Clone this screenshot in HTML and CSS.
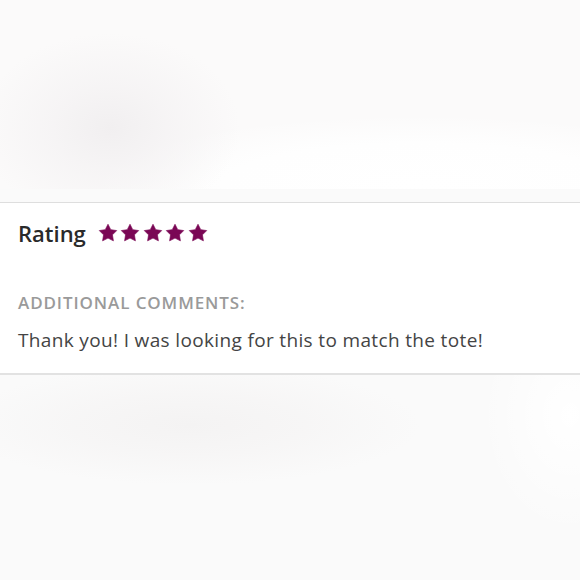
FILE: index.html
```html
<!DOCTYPE html>
<html>
<head>
<meta charset="utf-8">
<link rel="stylesheet" href="styles.css">
</head>
<body>
<div class="page">
  <div class="photo photo-top"></div>
  <div class="band"></div>
  <section class="review">
    <div class="rating-row">
      <span class="rating-label">Rating</span>
      <span class="stars">
        <svg class="star" viewBox="0 0 24 24"><polygon points="12,1.5 15.29,7.97 22.46,9.1 17.33,14.23 18.47,21.4 12,18.1 5.53,21.4 6.67,14.23 1.54,9.1 8.71,7.97"/></svg>
        <svg class="star" viewBox="0 0 24 24"><polygon points="12,1.5 15.29,7.97 22.46,9.1 17.33,14.23 18.47,21.4 12,18.1 5.53,21.4 6.67,14.23 1.54,9.1 8.71,7.97"/></svg>
        <svg class="star" viewBox="0 0 24 24"><polygon points="12,1.5 15.29,7.97 22.46,9.1 17.33,14.23 18.47,21.4 12,18.1 5.53,21.4 6.67,14.23 1.54,9.1 8.71,7.97"/></svg>
        <svg class="star" viewBox="0 0 24 24"><polygon points="12,1.5 15.29,7.97 22.46,9.1 17.33,14.23 18.47,21.4 12,18.1 5.53,21.4 6.67,14.23 1.54,9.1 8.71,7.97"/></svg>
        <svg class="star" viewBox="0 0 24 24"><polygon points="12,1.5 15.29,7.97 22.46,9.1 17.33,14.23 18.47,21.4 12,18.1 5.53,21.4 6.67,14.23 1.54,9.1 8.71,7.97"/></svg>
      </span>
    </div>
    <div class="comments-label">ADDITIONAL COMMENTS:</div>
    <p class="comment">Thank you! I was looking for this to match the tote!</p>
  </section>
  <div class="photo photo-bottom"></div>
</div>
</body>
</html>
```

FILE: styles.css
```css
html, body {
  margin: 0;
  padding: 0;
  background: #fafafa;
}
.page {
  width: 580px;
  height: 580px;
  display: flex;
  flex-direction: column;
  overflow: hidden;
  font-family: "Open Sans", Lato, sans-serif;
}
.photo-top {
  height: 189px;
  flex: none;
  background:
    radial-gradient(ellipse 130px 95px at 110px 128px, #f1eff0 0%, rgba(244,242,243,0.7) 45%, rgba(250,250,250,0) 100%),
    radial-gradient(ellipse 330px 70px at 420px 185px, #ffffff 0%, #fefefe 60%, rgba(253,252,252,0) 100%),
    #fbfafa;
}
.band {
  height: 13px;
  flex: none;
  background: #fafafa;
}
.review {
  flex: none;
  background: #fff;
  border-top: 1px solid #dedede;
  border-bottom: 2px solid #e2e2e2;
  padding: 0 18px;
  height: 170px;
  box-sizing: content-box;
}
.rating-row {
  display: flex;
  align-items: center;
  gap: 12px;
  padding-top: 15px;
  height: 30px;
}
.rating-label {
  font-size: 22px;
  font-weight: 600;
  color: #2a2a2a;
  line-height: 30px;
}
.stars {
  display: flex;
  gap: 2.5px;
  margin-top: -1px;
}
.star {
  width: 20px;
  height: 20px;
  fill: #7a0755;
  stroke: #7a0755;
  stroke-width: 0.8;
  stroke-linejoin: round;
  display: block;
}
.comments-label {
  margin-top: 45px;
  font-size: 17px;
  font-weight: 600;
  letter-spacing: 0.9px;
  color: #9a9a9a;
  line-height: 20px;
}
.comment {
  margin: 15px 0 0;
  font-size: 19px;
  letter-spacing: 0.35px;
  color: #444;
  line-height: 24px;
}
.photo-bottom {
  flex: 1;
  background:
    radial-gradient(ellipse 230px 60px at 190px 50px, #f4f3f3 0%, rgba(246,245,245,0.8) 50%, rgba(250,250,250,0) 100%),
    radial-gradient(ellipse 90px 120px at 570px 40px, #ffffff 0%, rgba(253,253,253,0) 100%),
    #fafafa;
}
```
